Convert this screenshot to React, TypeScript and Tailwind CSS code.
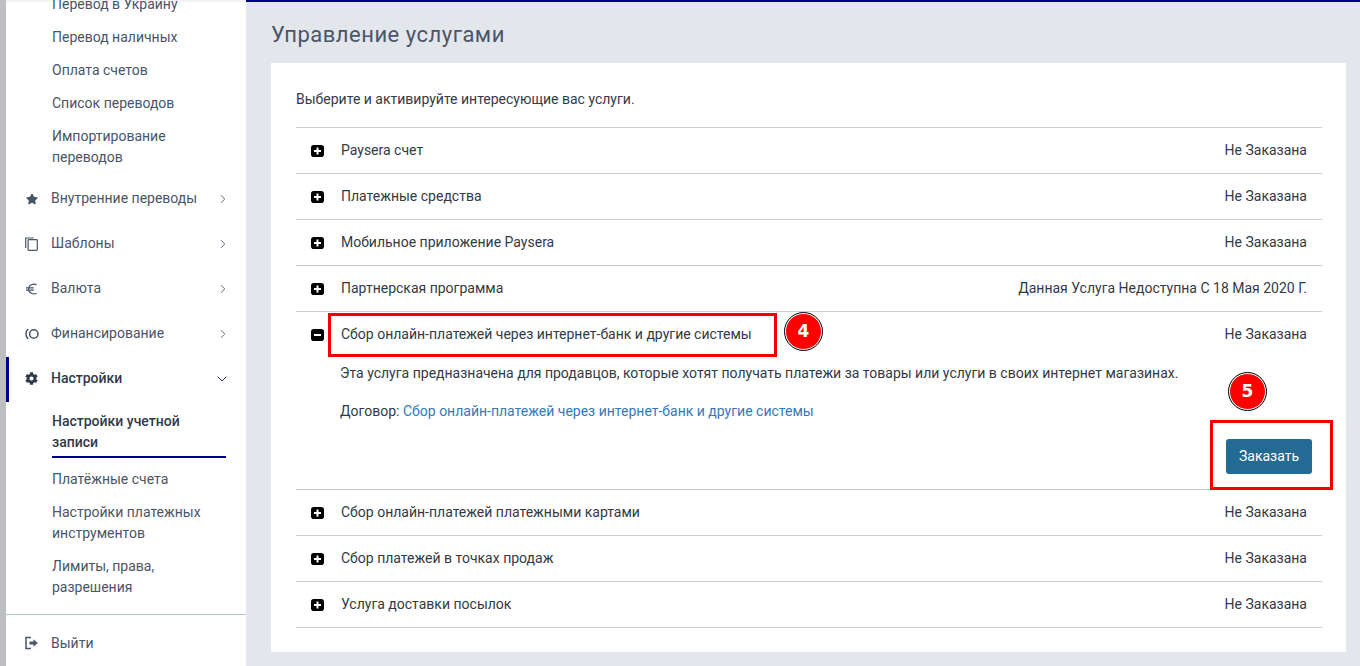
import type { ReactNode } from 'react';
import { FaCog, FaStar } from 'react-icons/fa';
import { ChevronDown, ChevronRight } from 'lucide-react';

function CopyIcon() {
  return (
    <svg viewBox="0 0 13 14" className="w-[13px] h-[14px]" fill="none" stroke="currentColor" strokeWidth="1.2">
      <path d="M.7 11V1h8" />
      <rect x="3.100" y="2.600" width="9.200" height="10.800" rx="0.800" />
    </svg>
  );
}

function EuroIcon() {
  return (
    <svg viewBox="0 0 14 12" className="w-[13px] h-[12px]" fill="none" stroke="currentColor" strokeWidth="1.3">
      <path d="M12.500 1.400C9 -0.200 4 1.500 3.800 6c.2 4.500 5.200 6.200 8.700 4.600" />
      <path d="M1 4.800h8.500M1 7.200h8.500" />
    </svg>
  );
}

function CreditIcon() {
  return (
    <svg viewBox="0 0 14 12" className="w-[14px] h-[12px]" fill="none" stroke="currentColor" strokeWidth="1.5">
      <path d="M3.200 1C.2 3.500 .2 8.500 3.200 11" />
      <circle cx="8.800" cy="6" r="4.200" />
    </svg>
  );
}

function LogoutIcon() {
  return (
    <svg viewBox="0 0 13 14" className="w-[13px] h-[14px]" fill="none" stroke="currentColor">
      <path d="M6 1.500H1v11h5" strokeWidth="1.500" />
      <path d="M4.500 7H9" strokeWidth="3" />
      <path d="M8.500 3.200 12.800 7l-4.300 3.800z" fill="currentColor" stroke="none" />
    </svg>
  );
}

function ToggleIcon({ open }: { open?: boolean }) {
  return (
    <svg viewBox="0 0 13 12" className="w-[13px] h-[12px] mr-[17px] shrink-0">
      <rect width="13" height="12" rx="2.800" fill="#000" />
      <path d={open ? 'M3 6h7' : 'M3 6h7M6.500 2.500v7'} stroke="#fff" strokeWidth="2" />
    </svg>
  );
}

function SubItem({ children, active }: { children: ReactNode; active?: boolean }) {
  return (
    <div className={`pl-[46px] pr-5 py-[6px] ${active ? '-mb-px' : ''}`}>
      <div className={active ? 'font-medium text-[#2f3b4c] border-b-2 border-[#00008b] pb-[3px]' : ''}>{children}</div>
    </div>
  );
}

function MenuItem({ icon, label, open }: { icon: ReactNode; label: string; open?: boolean }) {
  return (
    <div
      className={`flex items-center h-[45px] pb-[2px] pr-[16px] ${
        open ? 'border-l-[3px] border-[#00008b] pl-[15px] font-medium text-[#2f3b4c]' : 'pl-[18px]'
      }`}
    >
      <span className="w-[15px] mr-[12px] flex justify-center shrink-0">{icon}</span>
      <span className="flex-1">{label}</span>
      {open ? <ChevronDown size={16} strokeWidth={1.5} /> : <ChevronRight size={14} strokeWidth={1.5} />}
    </div>
  );
}

function Sidebar() {
  return (
    <aside className="w-[240px] h-[666px] bg-white overflow-hidden shrink-0 text-[14px] leading-[21px] text-[#4a5568] shadow-[inset_0_2px_2px_rgba(0,0,0,0.05)]">
      <div className="-mt-[12px]">
        <SubItem>Перевод в Украину</SubItem>
        <SubItem>Перевод наличных</SubItem>
        <SubItem>Оплата счетов</SubItem>
        <SubItem>Список переводов</SubItem>
        <SubItem>Импортирование переводов</SubItem>
      </div>
      <div className="mt-[3px]">
        <MenuItem icon={<FaStar size={12} />} label="Внутренние переводы" />
        <MenuItem icon={<CopyIcon />} label="Шаблоны" />
        <MenuItem icon={<EuroIcon />} label="Валюта" />
        <MenuItem icon={<CreditIcon />} label="Финансирование" />
        <MenuItem icon={<FaCog size={13} />} label="Настройки" open />
      </div>
      <div className="mt-[3px]">
        <SubItem active>Настройки учетной записи</SubItem>
        <SubItem>Платёжные счета</SubItem>
        <SubItem>Настройки платежных инструментов</SubItem>
        <SubItem>Лимиты, права, разрешения</SubItem>
      </div>
      <div className="mt-[10px] border-t border-[#b8c4cc] flex items-center h-[57px] pl-[18px]">
        <span className="w-[15px] mr-[12px] flex justify-center">
          <LogoutIcon />
        </span>
        Выйти
      </div>
    </aside>
  );
}

function ServiceRow({ title, status }: { title: string; status: string }) {
  return (
    <div className="flex items-center h-[46px] border-t border-[#cccccc] px-[15px]">
      <ToggleIcon />
      <span className="flex-1">{title}</span>
      <span>{status}</span>
    </div>
  );
}

export default function App() {
  const notOrdered = 'Не Заказана';
  return (
    <div
      className="relative flex w-[1360px] h-[666px] overflow-hidden bg-[#e3e6eb] text-[14px] leading-[21px] text-[#333a45]"
      style={{ fontFamily: 'Roboto, sans-serif' }}
    >
      <div className="w-[6px] bg-[#bcbec1] shrink-0" />
      <Sidebar />
      <main className="flex-1 border-t-2 border-[#00008b] pl-[25px] pr-[14px]">
        <h1 className="text-[22px] leading-[30px] font-normal text-[#4a5568] tracking-[0.5px] mt-[18px] mb-[13px]">
          Управление услугами
        </h1>
        <section className="bg-white h-[589px] pl-[25px] pr-[24px] pt-[26px]">
          <p className="mb-[17px]">Выберите и активируйте интересующие вас услуги.</p>
          <ServiceRow title="Paysera счет" status={notOrdered} />
          <ServiceRow title="Платежные средства" status={notOrdered} />
          <ServiceRow title="Мобильное приложение Paysera" status={notOrdered} />
          <ServiceRow title="Партнерская программа" status="Данная Услуга Недоступна С 18 Мая 2020 Г." />
          <div className="border-t border-[#cccccc] h-[178px] px-[15px]">
            <div className="flex items-center h-[45px]">
              <ToggleIcon open />
              <span className="flex-1">Сбор онлайн-платежей через интернет-банк и другие системы</span>
              <span>{notOrdered}</span>
            </div>
            <div className="pl-[29px]">
              <p className="mb-[17px] mt-[6px]">
                Эта услуга предназначена для продавцов, которые хотят получать платежи за товары или услуги в своих интернет магазинах.
              </p>
              <p>
                Договор: <a className="text-[#337ab7]">Сбор онлайн-платежей через интернет-банк и другие системы</a>
              </p>
              <div className="flex justify-end mt-[17px]">
                <button className="w-[86px] h-[35px] rounded-[3px] bg-[#236a95] text-white -mr-[5px]">Заказать</button>
              </div>
            </div>
          </div>
          <ServiceRow title="Сбор онлайн-платежей платежными картами" status={notOrdered} />
          <ServiceRow title="Сбор платежей в точках продаж" status={notOrdered} />
          <ServiceRow title="Услуга доставки посылок" status={notOrdered} />
          <div className="border-t border-[#cccccc]" />
        </section>
      </main>

      {/* annotations drawn over the screenshot */}
      <div className="absolute left-[328px] top-[313px] w-[449px] h-[44px] border-[3px] border-[#f00000]" />
      <div className="absolute left-[1210px] top-[420px] w-[123px] h-[70px] border-[3px] border-[#f00000]" />
      <div
        className="absolute left-[785px] top-[313px] w-[37px] h-[37px] rounded-full bg-[#ff0000] border border-white outline outline-1 outline-black flex items-center justify-center text-white font-bold text-[17px]"
        style={{ fontFamily: '"DejaVu Sans", sans-serif' }}
      >
        4
      </div>
      <div
        className="absolute left-[1229px] top-[373px] w-[37px] h-[37px] rounded-full bg-[#ff0000] border border-white outline outline-1 outline-black flex items-center justify-center text-white font-bold text-[17px]"
        style={{ fontFamily: '"DejaVu Sans", sans-serif' }}
      >
        5
      </div>
    </div>
  );
}
